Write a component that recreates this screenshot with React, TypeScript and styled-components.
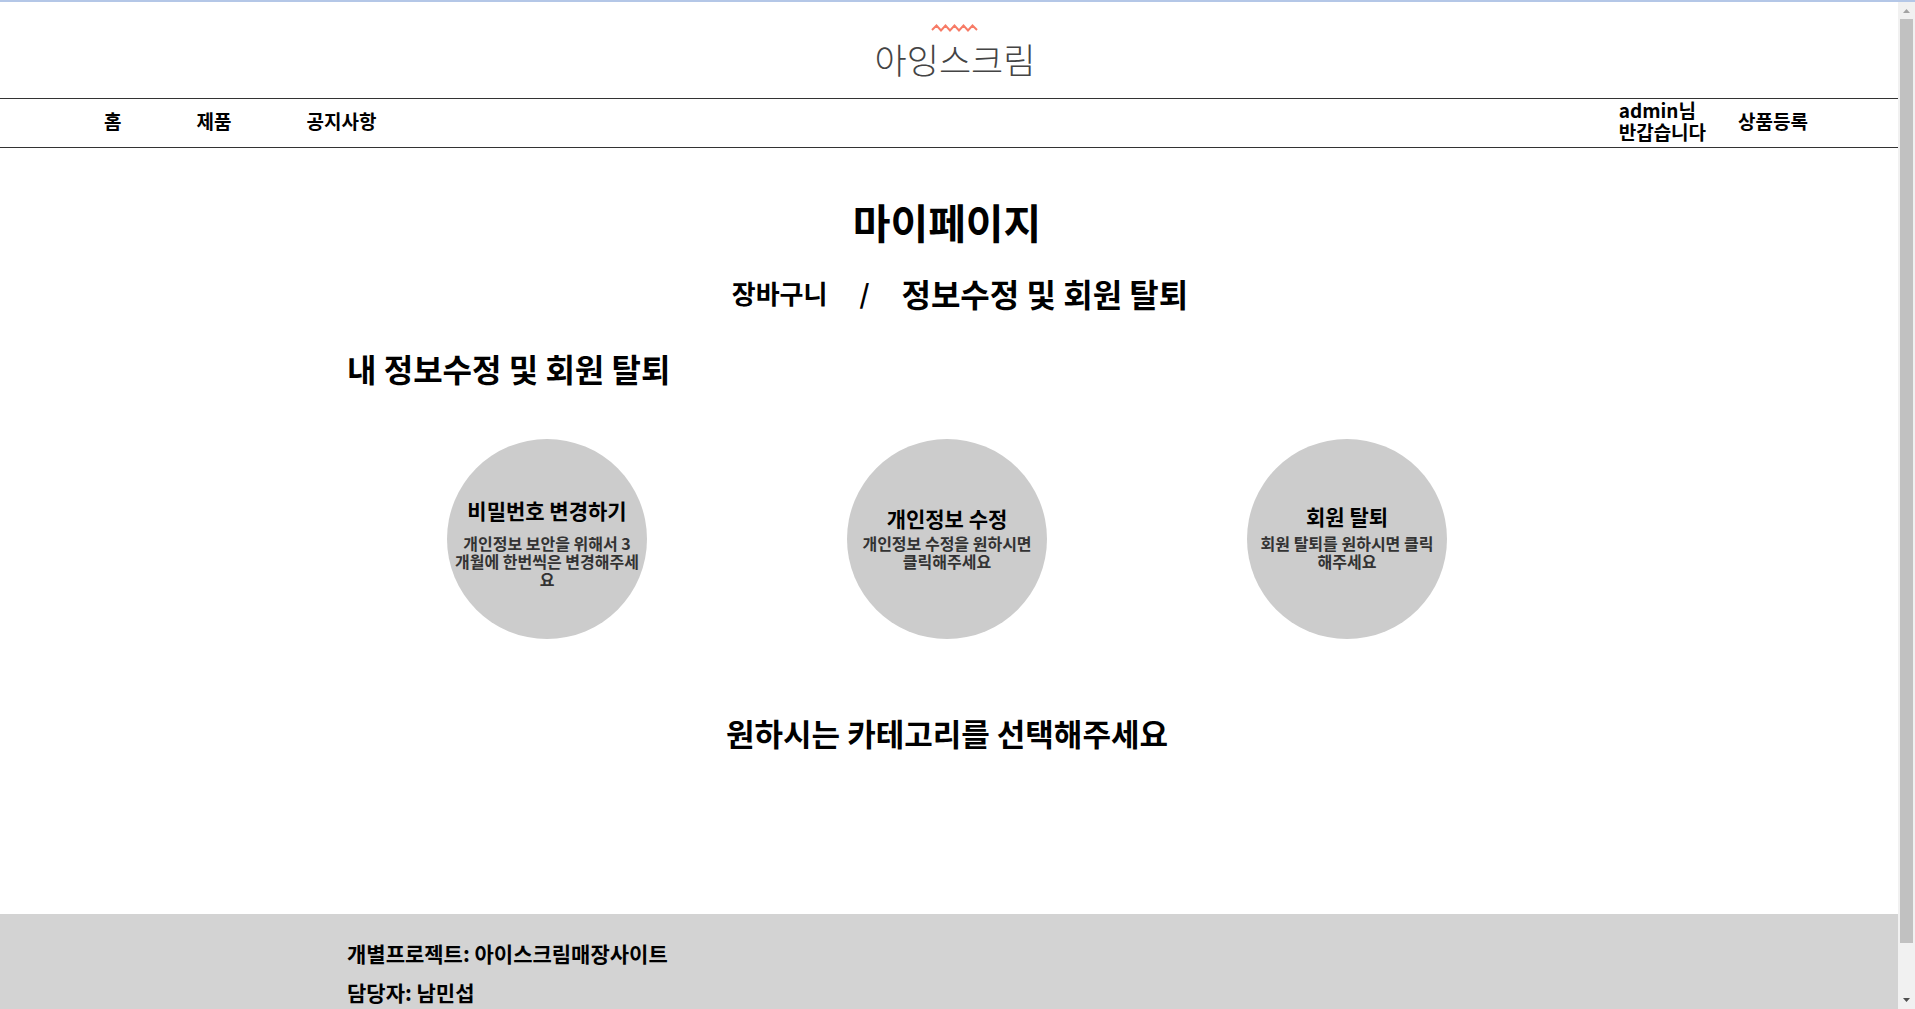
import React from 'react';
import styled, { createGlobalStyle } from 'styled-components';

const GlobalStyle = createGlobalStyle`
  * { box-sizing: border-box; }
  body {
    margin: 0;
    background: #fff;
    color: #000;
    font-family: "Noto Sans CJK KR", sans-serif;
    font-weight: 700;
  }
  h1, h2, h3, p, ul { margin: 0; padding: 0; }
  a { color: inherit; text-decoration: none; }
`;

const Shell = styled.div`
  display: flex;
  height: 100vh;
  overflow: hidden;
  border-top: 2px solid #b4c7e7;
`;

const Page = styled.div`
  flex: 1;
  min-width: 0;
  overflow: hidden;
`;

const Header = styled.header`
  display: flex;
  justify-content: center;
  height: 96px;
`;

const Nav = styled.nav`
  display: flex;
  justify-content: space-between;
  align-items: center;
  height: 50px;
  padding: 0 90px 4px 104px;
  border-top: 1px solid #333;
  border-bottom: 1px solid #333;
  font-size: 19px;
  line-height: 22px;
`;

const Menu = styled.ul<{ $gap: number }>`
  display: flex;
  align-items: center;
  gap: ${({ $gap }) => $gap}px;
  list-style: none;
`;

const Main = styled.main`
  max-width: 1204px;
  margin: 0 auto;
  padding: 47px 4px 0 0;
`;

const Title = styled.h1`
  font-size: 41px;
  line-height: 52px;
  text-align: center;
`;

const Tabs = styled.div`
  display: flex;
  justify-content: center;
  align-items: center;
  gap: 32px;
  margin: 24px 0 0 26px;
  font-size: 26px;
  line-height: 44px;
`;

const CurrentTab = styled.a`
  font-size: 32px;
`;

const SectionTitle = styled.h2`
  font-size: 32px;
  line-height: 44px;
`;

const Prompt = styled.h2`
  font-size: 31px;
  line-height: 44px;
  text-align: center;
`;

const Section = styled.section`
  padding-top: 31px;
`;

const Circles = styled.div`
  display: flex;
  justify-content: space-around;
  padding: 49px 0 72px;
`;

const Circle = styled.button`
  display: flex;
  flex-direction: column;
  align-items: center;
  justify-content: flex-start;
  width: 200px;
  height: 200px;
  padding: 0;
  border: 0;
  border-radius: 50%;
  background: #ccc;
  color: #000;
  font: inherit;
  cursor: pointer;
`;

const CircleTitle = styled.span<{ $gap: number }>`
  display: flex;
  align-items: flex-end;
  height: 95px;
  padding-bottom: ${({ $gap }) => $gap}px;
  font-size: 21px;
  line-height: 24px;
`;

const CircleText = styled.span`
  color: #333;
  font-size: 16px;
  line-height: 18px;
  white-space: pre;
`;

const Footer = styled.footer`
  min-height: 150px;
  margin-top: 159px;
  padding-top: 20px;
  background: #d3d3d3;
`;

const FooterInner = styled.div`
  max-width: 1204px;
  margin: 0 auto;
  font-size: 21px;
  line-height: 39px;
`;

const ScrollBar = styled.div`
  display: flex;
  flex-direction: column;
  align-items: center;
  width: 17px;
  background: #f1f1f1;
`;

const ScrollTrack = styled.div`
  flex: 1;
  width: 13px;
`;

const ScrollThumb = styled.div`
  height: 95%;
  background: #c1c1c1;
`;

const Arrow = styled.svg`
  display: block;
  width: 17px;
  height: 17px;
`;

const LogoArt = styled.svg`
  display: block;
  width: 240px;
  height: 96px;
  font-size: 35px;
  font-weight: 300;
`;

const cards = [
  { title: '비밀번호 변경하기', gap: 12, text: '개인정보 보안을 위해서 3\n개월에 한번씩은 변경해주세\n요' },
  { title: '개인정보 수정', gap: 4, text: '개인정보 수정을 원하시면\n클릭해주세요' },
  { title: '회원 탈퇴', gap: 6, text: '회원 탈퇴를 원하시면 클릭\n해주세요' },
];

const Logo = () => (
  <LogoArt viewBox="0 0 240 96" role="img" aria-label="아잉스크림">
    <path
      d="M103 28 L107.5 23.5 L112 28.5 L116.5 23.5 L121 28.5 L125.5 23.5 L130 28.5 L134.5 23.5 L139 28.5 L143.5 23.5 L148 28"
      fill="none"
      stroke="#f77b66"
      strokeWidth="2"
    />
    <text x="126" y="72" textAnchor="middle" fill="#444">아잉스크림</text>
  </LogoArt>
);

export default function App() {
  return (
    <>
      <GlobalStyle />
      <Shell>
        <Page>
          <Header>
            <a href="#home"><Logo /></a>
          </Header>
          <Nav>
            <Menu $gap={75}>
              <li><a href="#home">홈</a></li>
              <li><a href="#products">제품</a></li>
              <li><a href="#notice">공지사항</a></li>
            </Menu>
            <Menu $gap={32}>
              <li>admin님<br />반갑습니다</li>
              <li><a href="#register">상품등록</a></li>
            </Menu>
          </Nav>
          <Main>
            <Title>마이페이지</Title>
            <Tabs>
              <a href="#cart">장바구니</a>
              <span>/</span>
              <CurrentTab href="#info">정보수정 및 회원 탈퇴</CurrentTab>
            </Tabs>
            <Section>
              <SectionTitle>내 정보수정 및 회원 탈퇴</SectionTitle>
              <Circles>
                {cards.map((card) => (
                  <Circle key={card.title} type="button">
                    <CircleTitle $gap={card.gap}>{card.title}</CircleTitle>
                    <CircleText>{card.text}</CircleText>
                  </Circle>
                ))}
              </Circles>
              <Prompt>원하시는 카테고리를 선택해주세요</Prompt>
            </Section>
          </Main>
          <Footer>
            <FooterInner>
              <p>개별프로젝트: 아이스크림매장사이트</p>
              <p>담당자: 남민섭</p>
            </FooterInner>
          </Footer>
        </Page>
        <ScrollBar aria-hidden="true">
          <Arrow viewBox="0 0 17 17"><path d="M5 11h7L8.500 7z" fill="#a3a3a3" /></Arrow>
          <ScrollTrack><ScrollThumb /></ScrollTrack>
          <Arrow viewBox="0 0 17 17"><path d="M5 6h7L8.500 10z" fill="#505050" /></Arrow>
        </ScrollBar>
      </Shell>
    </>
  );
}
